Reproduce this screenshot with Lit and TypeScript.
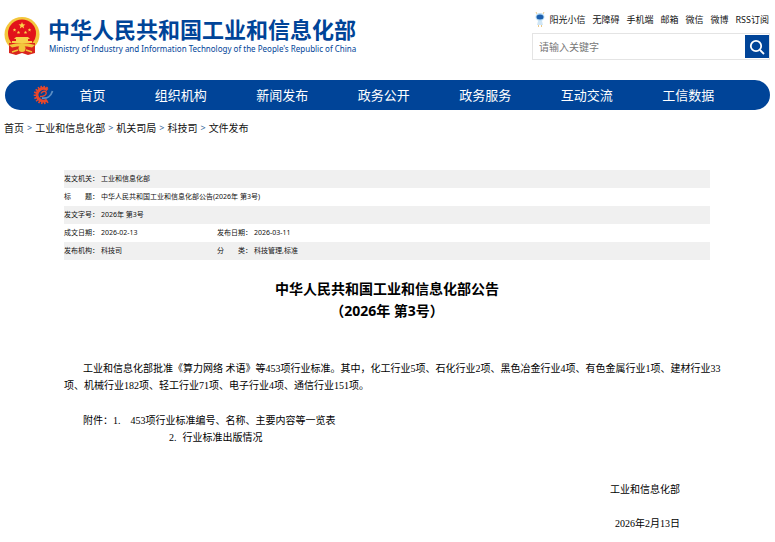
import { LitElement, html, css, svg } from "lit";
import { customElement } from "lit/decorators.js";

const quickLinks = ["无障碍", "手机端", "邮箱", "微信", "微博", "RSS订阅"];
const sections = ["组织机构", "新闻发布", "政务公开", "政务服务", "互动交流", "工信数据"];
const trail = ["首页", "工业和信息化部", "机关司局", "科技司", "文件发布"];
const record: string[][] = [
  ["发文机关：", "工业和信息化部"],
  ["标　　题：", "中华人民共和国工业和信息化部公告(2026年 第3号)"],
  ["发文字号：", "2026年 第3号"],
  ["成文日期：", "2026-02-13", "发布日期：", "2026-03-11"],
  ["发布机构：", "科技司", "分　　类：", "科技管理,标准"],
];

const star = (cx: number, cy: number, r: number) => {
  const pts: string[] = [];
  for (let i = 0; i < 10; i++) {
    const a = (i * Math.PI) / 5 - Math.PI / 2;
    const k = i % 2 ? r * 0.45 : r;
    pts.push(`${(cx + k * Math.cos(a)).toFixed(2)},${(cy + k * Math.sin(a)).toFixed(2)}`);
  }
  return svg`<polygon points=${pts.join(" ")} fill="#fbd54a"/>`;
};

const teeth = Array.from({ length: 13 }, (_, i) => {
  const a = ((58 + i * 20) * Math.PI) / 180;
  const c = Math.cos(a);
  const s = Math.sin(a);
  return svg`<line x1=${10 + 6 * c} y1=${10 + 6 * s} x2=${10 + 9.3 * c} y2=${10 + 9.3 * s} stroke="#e8472b" stroke-width="1.6"/>`;
});

@customElement("app-root")
export class AppRoot extends LitElement {
  static styles = css`
    :host {
      display: block;
      background: #fff;
      color: #111;
      font-family: "Noto Sans", "Noto Sans CJK SC", sans-serif;
    }
    a { color: inherit; text-decoration: none; }
    .top {
      display: flex;
      justify-content: space-between;
      padding: 12px 5px 0 4px;
    }
    .brand { display: flex; gap: 8px; color: #004498; padding-top: 5px; }
    .emblem { width: 36px; height: 39px; display: block; }
    .name {
      margin: 0;
      font: bold 22px/27px "Liberation Sans", "Noto Sans CJK SC", sans-serif;
      white-space: nowrap;
    }
    .english { margin: 0; font-size: 8px; line-height: 10px; white-space: nowrap; padding-left: 1px; }
    .tools { width: 238px; }
    .quick { display: flex; justify-content: flex-end; gap: 7px; font-size: 9px; line-height: 16px; white-space: nowrap; margin-right: 1px; }
    .sun { display: flex; gap: 4px; }
    .mascot { width: 10px; height: 16px; }
    .search { display: flex; box-sizing: border-box; height: 27px; margin-top: 5px; border: 1px solid #e4e4e4; padding: 1px 0 1px 1px; }
    .field { flex: 1; min-width: 0; border: 0; padding: 0 5px; outline: 0; font: 10px/16px "Noto Sans CJK SC", sans-serif; }
    .field::placeholder { color: #777; }
    .go { width: 24px; border: 0; padding: 0; background: #004498; display: grid; place-items: center; }
    .nav {
      display: flex;
      align-items: center;
      height: 30px;
      margin: 20px 5px 0;
      padding: 0 31px 0 28px;
      border-radius: 15px;
      background: #004498;
      color: #fff;
      font-size: 13px;
      line-height: 30px;
      text-align: center;
      white-space: nowrap;
    }
    .gear { width: 22px; height: 20px; }
    .home { width: 75px; }
    .section { flex: 1; }
    .trail { display: flex; gap: 3px; padding: 0 4px; margin-top: 10px; font-size: 10px; line-height: 16px; }
    .arrow { color: #336699; font-size: 9px; }
    .doc { padding: 34px 65px 0 64px; }
    .record { width: 100%; border-collapse: collapse; table-layout: fixed; font-size: 7px; line-height: 18px; }
    .record tr:nth-child(odd) { background: #f0f0f0; }
    .record th, .record td { padding: 0; font-weight: normal; text-align: left; white-space: nowrap; }
    .key { width: 37px; }
    .val { width: 116px; }
    .title { margin: 18px 0 38px; font-size: 14px; line-height: 22px; font-weight: bold; text-align: center; color: #000; }
    .body { font: 10px/17px "Liberation Serif", "Noto Sans CJK SC", serif; color: #000; }
    .para { margin: 0; text-indent: 19px; white-space: nowrap; }
    .files { display: grid; grid-template-columns: auto 1fr; margin: 18px 0 0 19px; }
    .list { margin: 0; padding: 0; list-style: none; }
    .item { display: flex; gap: 10px; }
    .second { gap: 6px; padding-left: 56px; }
    .sign { display: flex; flex-direction: column; align-items: flex-end; gap: 17px; margin-top: 35px; padding: 0 30px 10px 0; }
    .org { margin: 0; }
    .date { margin: 0; }
  `;

  render() {
    return html`
      <header class="top">
        <div class="brand">
          <svg class="emblem" viewBox="0 0 36 39" aria-hidden="true">
            <circle cx="18" cy="17.5" r="17.5" fill="#f3c63c"/>
            <path d="M5 26L5 36L12 38L18 36L24 38L31 36L31 26Z" fill="#d9251d"/>
            <circle cx="18" cy="16.5" r="14" fill="#e2131a"/>
            ${star(18, 8.5, 3.6)}${star(10.5, 13, 1.8)}${star(14.5, 15.5, 1.8)}${star(21.5, 15.5, 1.8)}${star(25.5, 13, 1.8)}
            <path d="M12 20H24L26 22H24V24H28V26H8V24H12V22H10Z" fill="#f8d04a"/>
            <path d="M5 28Q18 24 31 28L28 30.5Q18 28 8 30.5Z" fill="#f3c63c"/>
            <circle cx="18" cy="31.5" r="3.5" fill="#f3c63c"/>
            <path d="M8 35L14 33M28 35L22 33" stroke="#f3c63c" stroke-width="1.5"/>
          </svg>
          <div>
            <h1 class="name">中华人民共和国工业和信息化部</h1>
            <p class="english">Ministry of Industry and Information Technology of the People's Republic of China</p>
          </div>
        </div>
        <div class="tools">
          <div class="quick">
            <a class="sun" href="#">
              <svg class="mascot" viewBox="0 0 10 16" aria-hidden="true">
                <path d="M2 2L1 0M8 2L9 0" stroke="#e9c98a"/>
                <ellipse cx="5" cy="5" rx="4.5" ry="4" fill="#b9dcf3"/>
                <ellipse cx="5" cy="5" rx="3.5" ry="2.5" fill="#1c5fae"/>
                <path d="M3 9H7L8 13H2Z" fill="#cfe5f5"/>
                <path d="M3.5 13V15M6.5 13V15" stroke="#e9c98a"/>
              </svg>
              阳光小信</a>
            ${quickLinks.map((t) => html`<a href="#">${t}</a>`)}
          </div>
          <form class="search">
            <input class="field" type="text" aria-label="请输入关键字" placeholder="请输入关键字">
            <button class="go" type="button" aria-label="搜索">
              <svg width="16" height="16" viewBox="0 0 16 16" fill="none" stroke="#fff" stroke-width="1.8">
                <circle cx="7" cy="7" r="5.2"/><path d="M11 11L15 15"/>
              </svg>
            </button>
          </form>
        </div>
      </header>
      <nav class="nav">
        <svg class="gear" viewBox="0 0 22 20" aria-hidden="true">
          ${teeth}
          <path d="M14.5 5A6.3 6.3 0 1 0 14 15" fill="none" stroke="#e8472b" stroke-width="3"/>
          <path d="M8 8.500C10 5 14 6 13 9C12 11 10 11.500 7 11.500" fill="none" stroke="#e8472b" stroke-width="1.5"/>
          <path d="M9 13C14 14 18 11 19.500 6" fill="none" stroke="#5b8fc4" stroke-width="1.8"/>
        </svg>
        <a class="home" href="#">首页</a>
        ${sections.map((t) => html`<a class="section" href="#">${t}</a>`)}
      </nav>
      <nav class="trail">
        ${trail.map((t, i) => html`${i ? html`<span class="arrow">&gt;</span>` : ""}<a href="#">${t}</a>`)}
      </nav>
      <main class="doc">
        <table class="record">
          <colgroup><col class="key"><col class="val"><col class="key"><col></colgroup>
          <tbody>
            ${record.map((r) => r.length === 2
              ? html`<tr><th scope="row">${r[0]}</th><td colspan="3">${r[1]}</td></tr>`
              : html`<tr><th scope="row">${r[0]}</th><td>${r[1]}</td><th scope="row">${r[2]}</th><td>${r[3]}</td></tr>`)}
          </tbody>
        </table>
        <h2 class="title">中华人民共和国工业和信息化部公告<br>（2026年 第3号）</h2>
        <div class="body">
          <p class="para">工业和信息化部批准《算力网络 术语》等453项行业标准。其中，化工行业5项、石化行业2项、黑色冶金行业4项、有色金属行业1项、建材行业33<br>项、机械行业182项、轻工行业71项、电子行业4项、通信行业151项。</p>
          <div class="files">
            <span>附件：</span>
            <ol class="list">
              <li class="item"><span>1.</span><a href="#">453项行业标准编号、名称、主要内容等一览表</a></li>
              <li class="item second"><span>2.</span><a href="#">行业标准出版情况</a></li>
            </ol>
          </div>
          <div class="sign">
            <p class="org">工业和信息化部</p>
            <p class="date">2026年2月13日</p>
          </div>
        </div>
      </main>
    `;
  }
}
